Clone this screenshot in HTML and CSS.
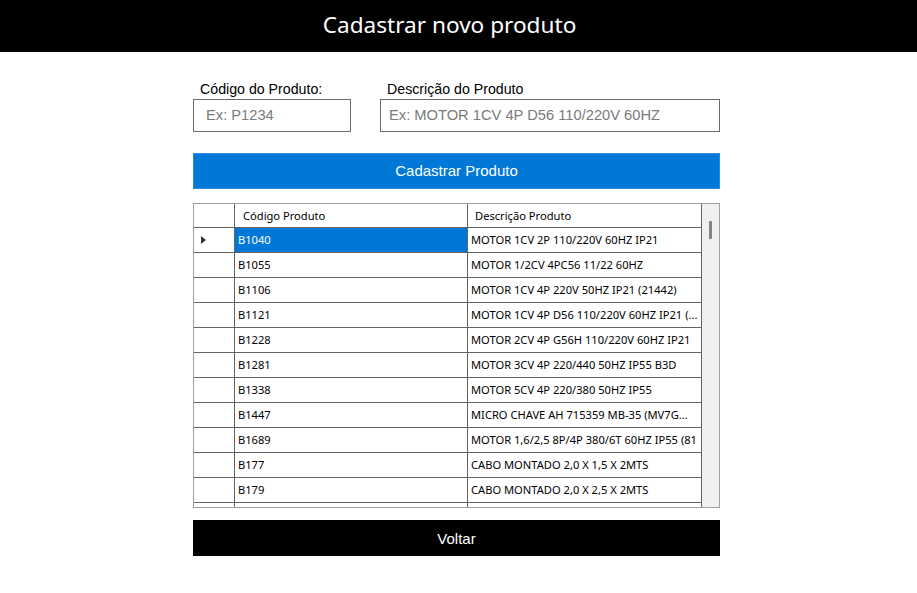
FILE: index.html
```html
<!DOCTYPE html>
<html lang="pt">
<head>
<meta charset="utf-8">
<title>Cadastrar novo produto</title>
<link rel="stylesheet" href="styles.css">
</head>
<body>
<header class="topbar"><h1 class="title">Cadastrar novo produto</h1></header>
<main class="content">
  <div class="form-row">
    <div class="field field-code">
      <label class="label" for="codigo">Código do Produto:</label>
      <input class="input" id="codigo" type="text" placeholder="Ex: P1234">
    </div>
    <div class="field field-desc">
      <label class="label" for="descricao">Descrição do Produto</label>
      <input class="input" id="descricao" type="text" placeholder="Ex: MOTOR 1CV 4P D56 110/220V 60HZ">
    </div>
  </div>
  <button class="btn btn-primary" type="button">Cadastrar Produto</button>
  <div class="grid">
    <div class="table">
      <div class="row head">
        <div class="cell rh"></div>
        <div class="cell c1">Código Produto</div>
        <div class="cell c2">Descrição Produto</div>
      </div>
      <div class="row">
        <div class="cell rh"><span class="arrow"></span></div>
        <div class="cell c1 selected">B1040</div>
        <div class="cell c2">MOTOR 1CV 2P 110/220V 60HZ IP21</div>
      </div>
      <div class="row">
        <div class="cell rh"></div>
        <div class="cell c1">B1055</div>
        <div class="cell c2">MOTOR 1/2CV 4PC56 11/22 60HZ</div>
      </div>
      <div class="row">
        <div class="cell rh"></div>
        <div class="cell c1">B1106</div>
        <div class="cell c2">MOTOR 1CV 4P 220V 50HZ IP21 (21442)</div>
      </div>
      <div class="row">
        <div class="cell rh"></div>
        <div class="cell c1">B1121</div>
        <div class="cell c2">MOTOR 1CV 4P D56 110/220V 60HZ IP21 (...</div>
      </div>
      <div class="row">
        <div class="cell rh"></div>
        <div class="cell c1">B1228</div>
        <div class="cell c2">MOTOR 2CV 4P G56H 110/220V 60HZ IP21</div>
      </div>
      <div class="row">
        <div class="cell rh"></div>
        <div class="cell c1">B1281</div>
        <div class="cell c2">MOTOR 3CV 4P 220/440 50HZ IP55 B3D</div>
      </div>
      <div class="row">
        <div class="cell rh"></div>
        <div class="cell c1">B1338</div>
        <div class="cell c2">MOTOR 5CV 4P 220/380 50HZ IP55</div>
      </div>
      <div class="row">
        <div class="cell rh"></div>
        <div class="cell c1">B1447</div>
        <div class="cell c2">MICRO CHAVE AH 715359 MB-35 (MV7G...</div>
      </div>
      <div class="row">
        <div class="cell rh"></div>
        <div class="cell c1">B1689</div>
        <div class="cell c2">MOTOR 1,6/2,5 8P/4P 380/6T 60HZ IP55 (81</div>
      </div>
      <div class="row">
        <div class="cell rh"></div>
        <div class="cell c1">B177</div>
        <div class="cell c2">CABO MONTADO 2,0 X 1,5 X 2MTS</div>
      </div>
      <div class="row">
        <div class="cell rh"></div>
        <div class="cell c1">B179</div>
        <div class="cell c2">CABO MONTADO 2,0 X 2,5 X 2MTS</div>
      </div>
      <div class="row row-partial">
        <div class="cell rh"></div>
        <div class="cell c1"></div>
        <div class="cell c2"></div>
      </div>
    </div>
    <div class="scrollbar"><div class="thumb"></div></div>
  </div>
  <button class="btn btn-dark" type="button">Voltar</button>
</main>
</body>
</html>
```
FILE: styles.css
```css
* { box-sizing: border-box; }
html, body { margin: 0; padding: 0; background: #ffffff; }
body { font-family: "Liberation Sans", Arial, sans-serif; color: #000; }

.topbar {
  height: 52px;
  background: #000;
  display: flex;
  align-items: center;
  justify-content: center;
  padding-right: 18px;
  padding-bottom: 1px;
}
.title {
  margin: 0;
  color: #fff;
  font-family: "Noto Sans", "Open Sans", sans-serif;
  font-weight: 400;
  font-size: 22.6px;
  line-height: 1;
}

.content {
  width: 527px;
  margin-left: 193px;
  padding-top: 29px;
  display: flex;
  flex-direction: column;
}

.form-row { display: flex; gap: 29px; }
.field { display: flex; flex-direction: column; }
.field-code { width: 158px; }
.field-desc { width: 340px; }
.label {
  font-size: 14.2px;
  line-height: 16px;
  padding-left: 7px;
  height: 18px;
  color: #000;
}
.input {
  height: 33px;
  border: 1px solid #6a6a6a;
  border-radius: 0;
  padding: 0 0 2px 12px;
  font-family: "Liberation Sans", Arial, sans-serif;
  font-size: 14.7px;
  color: #000;
  outline: none;
  background: #fff;
  width: 100%;
}
.field-desc .input { padding-left: 8px; }
.input::placeholder { color: #7a7a7a; }

.btn {
  border: 0;
  border-radius: 0;
  width: 527px;
  color: #fff;
  font-family: "Liberation Sans", Arial, sans-serif;
  font-size: 15px;
  padding: 0;
  cursor: pointer;
}
.btn-primary {
  margin-top: 21px;
  height: 36px;
  padding-bottom: 2px;
  background: #0078d7;
  border: 1px solid #2a8ce0;
}
.btn-dark {
  margin-top: 12px;
  height: 36px;
  background: #000;
}

.grid {
  margin-top: 14px;
  height: 305px;
  border: 1px solid #a0a0a0;
  display: flex;
  background: #fff;
}
.table { width: 508px; overflow: hidden; }
.row {
  display: grid;
  grid-template-columns: 41px 233px 234px;
  height: 25px;
}
.row.head { height: 24px; }
.cell {
  border-right: 1px solid #646464;
  border-bottom: 1px solid #646464;
  font-family: "Noto Sans", "Open Sans", sans-serif;
  font-size: 11.15px;
  line-height: 24px;
  white-space: nowrap;
  overflow: hidden;
  color: #000;
  padding-left: 3px;
}
.head .cell { line-height: 23px; padding-left: 8px; }
.head .c2 { padding-left: 7px; }
.rh { display: flex; align-items: center; padding-left: 7px; }
.selected { background: #0078d7; color: #fff; }
.arrow {
  width: 0; height: 0;
  border-top: 4px solid transparent;
  border-bottom: 4px solid transparent;
  border-left: 5px solid #333;
}

.scrollbar {
  width: 17px;
  background: #f0f0f0;
  padding-top: 17px;
  display: flex;
  justify-content: center;
}
.thumb {
  width: 3px;
  height: 18px;
  background: #858585;
}
```
